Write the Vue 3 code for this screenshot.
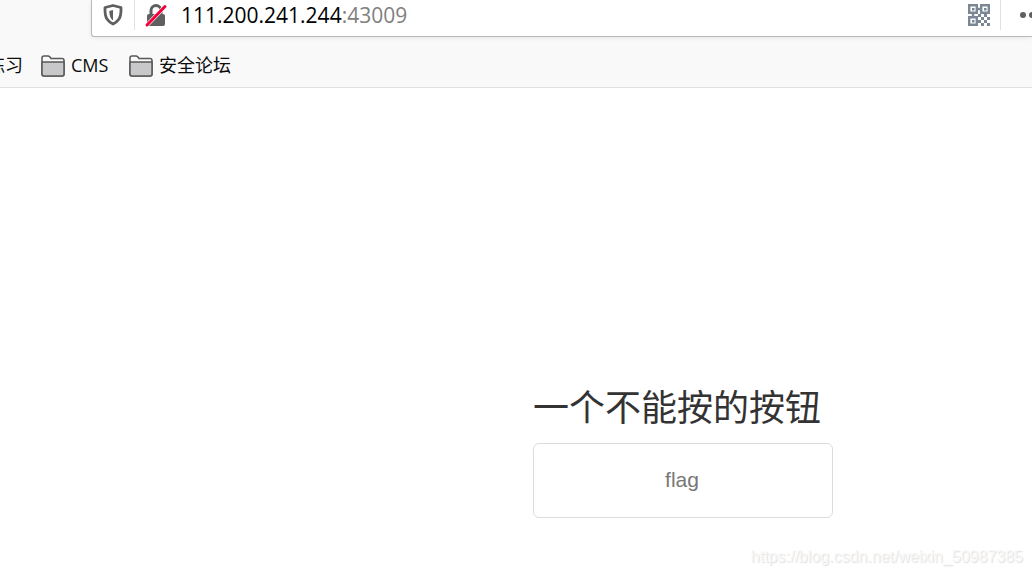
<script setup>
const bookmarks = ['CMS', '安全论坛']
</script>

<template>
  <div class="browser">
    <header class="chrome">
      <div class="urlbar">
        <button class="icon shield" aria-label="Tracking protection">
          <svg width="22" height="24" viewBox="0 0 22 24">
            <path d="M11 2.500 19 4.500Q19.300 12.500 17 16Q15 19 11 21Q7 19 5 16Q2.700 12.500 3 4.500Z" fill="none" stroke="#5f5f60" stroke-width="2.800" stroke-linejoin="round" />
            <path d="M11 7v10.500Q7.300 15 7.300 8Z" fill="#5f5f60" />
          </svg>
        </button>
        <button class="icon lock" aria-label="Connection is not secure">
          <svg width="24" height="26" viewBox="0 0 24 26">
            <path d="M7 14V8.500a5 5 0 0 1 10 0V14" fill="none" stroke="#5f5f60" stroke-width="3" />
            <rect x="3" y="12" width="18" height="12" rx="2" fill="#5f5f60" />
            <path d="M3 23 21 4.500" stroke="#fff" stroke-width="4" />
            <path d="M3 23 21 4.500" stroke="#f5003d" stroke-width="3" stroke-linecap="round" />
          </svg>
        </button>
        <span class="address"><b>111.200.241.244</b>:43009</span>
        <button class="icon qr" aria-label="QR code">
          <svg width="22" height="22" viewBox="0 0 22 22">
            <g fill="none" stroke="#7b8794" stroke-width="2.400">
              <path d="M1.200 1.200h7.600v7.600H1.200ZM13.200 1.200h7.600v7.600h-7.600ZM1.200 13.200h7.600v7.600H1.200ZM9 5h4M5 9v4" />
            </g>
            <path fill="#7b8794" d="M4 4h2.500v2.500H4ZM16 4h2.500v2.500H16ZM4 16h2.500v2.500H4ZM10 10h3v3h-3ZM16 10h3v3h-3ZM13 13h3v3h-3ZM19 13h3v3h-3ZM10 16h3v3h-3ZM16 16h3v3h-3ZM13 19h3v3h-3ZM19 19h3v3h-3Z" />
          </svg>
        </button>
        <button class="icon more" aria-label="Page actions">
          <svg width="28" height="8" viewBox="0 0 28 8" fill="#5f5f60">
            <circle cx="4" cy="4" r="3" /><circle cx="13" cy="4" r="3" /><circle cx="22" cy="4" r="3" />
          </svg>
        </button>
      </div>
      <nav class="bookmarks">
        <a href="#" class="clipped"><span class="label">练习</span></a>
        <a v-for="name in bookmarks" :key="name" href="#">
          <svg width="24" height="22" viewBox="0 0 24 22" stroke="#58585a" stroke-width="1.500" stroke-linejoin="round">
            <path d="M1 19V3q0-2 2-2h4q1 0 2 1l1 1.500h11q2 0 2 2V19q0 2-2 2H3q-2 0-2-2Z" fill="#f9f9fa" />
            <path d="M1 7h22v12q0 2-2 2H3q-2 0-2-2Z" fill="#c8c8ca" />
          </svg>
          <span class="label">{{ name }}</span>
        </a>
      </nav>
    </header>
    <main>
      <h1>一个不能按的按钮</h1>
      <button class="flag" disabled>flag</button>
    </main>
    <footer>https://blog.csdn.net/weixin_50987385</footer>
  </div>
</template>

<style>
body {
  margin: 0;
  background: #fff;
}
</style>

<style scoped>
.browser {
  display: flex;
  flex-direction: column;
  min-height: 100vh;
  overflow: hidden;
  font-family: "Open Sans", "Noto Sans CJK SC", sans-serif;
}
.chrome {
  background: #f9f9fa;
  border-bottom: 1px solid #e0e0e1;
}
.urlbar {
  display: flex;
  align-items: center;
  height: 36px;
  margin-left: 91px;
  border: 1px solid #b9b9ba;
  border-width: 0 0 1px 1px;
  border-radius: 0 0 0 3px;
  background: #fff;
  box-shadow: 0 1px 4px rgba(0, 0, 0, 0.08);
}
.icon {
  display: flex;
  align-items: center;
  justify-content: center;
  flex: none;
  box-sizing: border-box;
  height: 30px;
  margin-bottom: 6px;
  padding: 0;
  border: 0;
  background: none;
}
.icon svg {
  flex: none;
}
.shield {
  width: 43px;
  border-right: 1px solid #e0e0e1;
}
.lock {
  width: 42px;
}
.address {
  flex: 1;
  margin-left: 4px;
  padding-bottom: 6px;
  font-size: 21px;
  line-height: 30px;
  color: #808080;
}
.address b {
  font-weight: 400;
  color: #000;
}
.qr {
  width: 44px;
  border-right: 1px solid #e0e0e1;
}
.more {
  width: 31px;
  justify-content: flex-start;
  padding-left: 18px;
  overflow: hidden;
}
.bookmarks {
  display: flex;
  align-items: center;
  gap: 18px;
  height: 42px;
  padding-top: 8px;
}
.bookmarks a {
  display: flex;
  align-items: center;
  gap: 6px;
  font-size: 18px;
  line-height: 24px;
  color: #0c0c0d;
  text-decoration: none;
  white-space: nowrap;
}
.bookmarks .label {
  min-width: 40px;
  padding-bottom: 2px;
}
.bookmarks .clipped {
  justify-content: flex-end;
  width: 23px;
  overflow: hidden;
}
.clipped .label {
  min-width: 0;
  flex: none;
}
main {
  flex: 1;
  display: flex;
  flex-direction: column;
  align-items: flex-start;
  justify-content: flex-end;
  padding: 0 16px 29px 533px;
}
h1 {
  margin: 0 0 15px;
  font-size: 36px;
  font-weight: 400;
  line-height: 40px;
  color: #333;
}
.flag {
  width: 300px;
  height: 75px;
  padding: 0 8px 2px 6px;
  border: 1px solid #dcdcdc;
  border-radius: 6px;
  background: #fff;
  font-family: "Liberation Sans", Arial, sans-serif;
  font-size: 21px;
  color: #777;
}
footer {
  padding: 0 9px 8px;
  font-family: "Liberation Sans", Arial, sans-serif;
  font-size: 16px;
  line-height: 20px;
  text-align: right;
  color: #f8f8f8;
  text-shadow: 1px 1px 1px #dedede;
}
</style>
